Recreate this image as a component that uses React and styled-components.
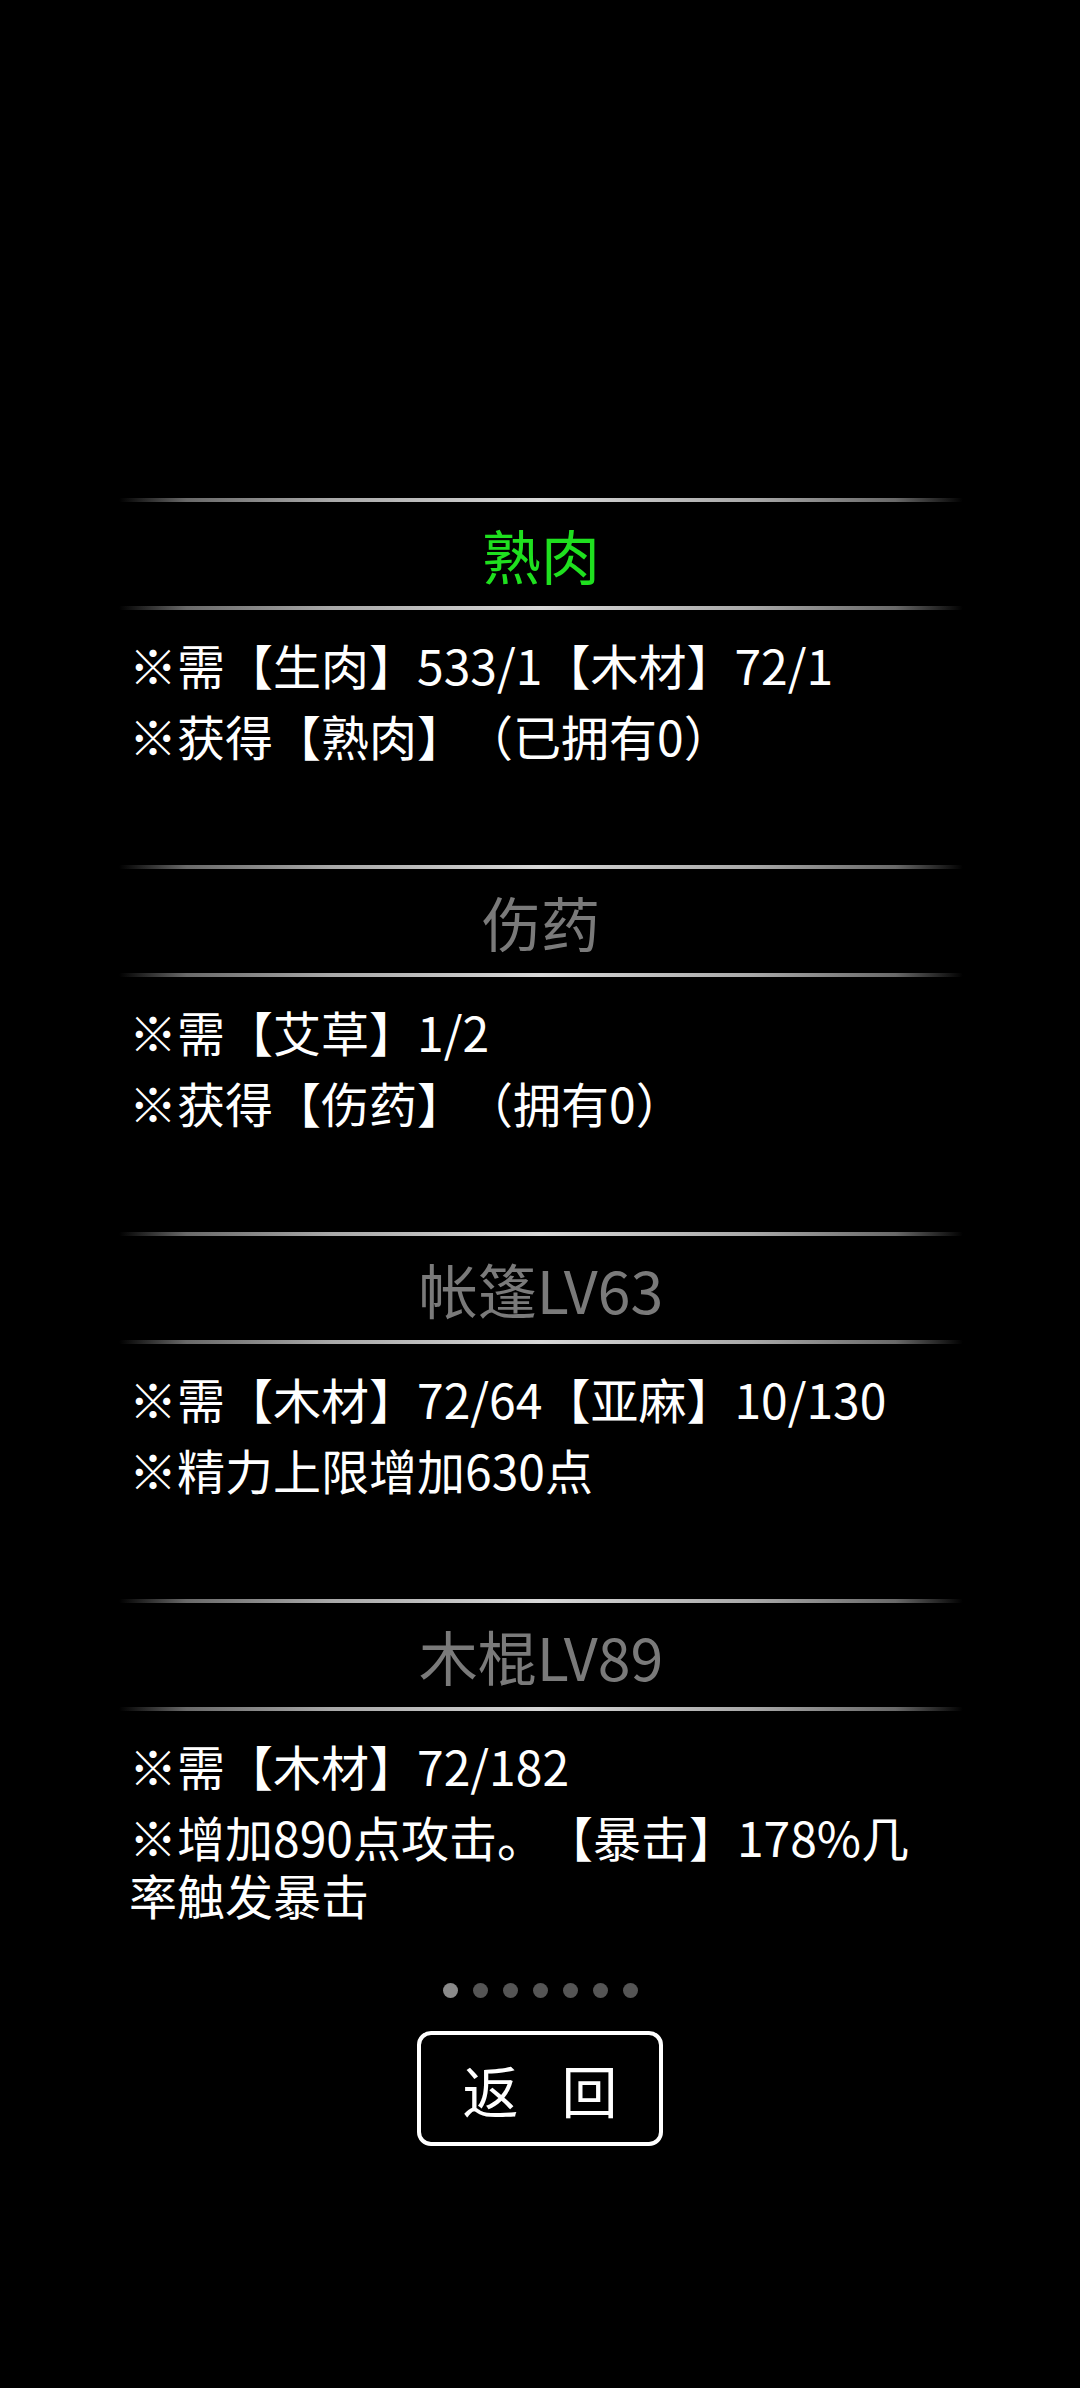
import React from 'react';
import styled, { createGlobalStyle } from 'styled-components';

const GlobalStyle = createGlobalStyle`
  html, body {
    margin: 0;
    padding: 0;
    background: #000;
  }
  body {
    font-family: "Noto Sans CJK SC", "Noto Sans", sans-serif;
    text-spacing-trim: space-all;
  }
`;

const recipes = [
  {
    title: '熟肉',
    active: true,
    lines: ['※需【生肉】533/1【木材】72/1', '※获得【熟肉】（已拥有0）'],
  },
  {
    title: '伤药',
    lines: ['※需【艾草】1/2', '※获得【伤药】（拥有0）'],
  },
  {
    title: '帐篷LV63',
    lines: ['※需【木材】72/64【亚麻】10/130', '※精力上限增加630点'],
  },
  {
    title: '木棍LV89',
    lines: ['※需【木材】72/182', '※增加890点攻击。【暴击】178%几率触发暴击'],
  },
];

export default function App() {
  const page = 0;

  return (
    <>
      <GlobalStyle />
      <Page>
        <List>
          {recipes.map(({ title, active, lines }, index) => (
            <Recipe key={index}>
              <Divider />
              <Title $active={active}>{title}</Title>
              <Divider />
              <Body>
                {lines.map((line, i) => (
                  <Line key={i}>{line}</Line>
                ))}
              </Body>
            </Recipe>
          ))}
        </List>
        <Dots>
          {[0, 1, 2, 3, 4, 5, 6].map((i) => (
            <Dot key={i} $active={i === page} />
          ))}
        </Dots>
        <BackButton>
          <span>返</span>
          <span>回</span>
        </BackButton>
      </Page>
    </>
  );
}

const Page = styled.div`
  width: 1080px;
  min-height: 2388px;
  background: #000;
  display: flex;
  flex-direction: column;
  align-items: center;
  padding-top: 498px;
  box-sizing: border-box;
`;

const List = styled.div`
  width: 844px;
  margin-left: 2px;
  display: flex;
  flex-direction: column;
  gap: 101px;
`;

const Recipe = styled.section`
  display: flex;
  flex-direction: column;
`;

const Divider = styled.div`
  height: 4px;
  width: 100%;
  border-radius: 2px;
  background: linear-gradient(
    90deg,
    rgba(255, 255, 255, 0) 0%,
    rgba(150, 150, 150, 0.7) 8%,
    #a8a8a8 25%,
    #d8d8d8 50%,
    #a8a8a8 75%,
    rgba(150, 150, 150, 0.7) 92%,
    rgba(255, 255, 255, 0) 100%
  );
`;

const Title = styled.h2`
  margin: 0;
  height: 104px;
  display: flex;
  align-items: center;
  justify-content: center;
  font-size: 59px;
  font-weight: 400;
  color: ${(p) => (p.$active ? '#1fe01f' : '#7a7a7a')};
`;

const Body = styled.div`
  padding: 25px 24px 0 10px;
  display: flex;
  flex-direction: column;
  gap: 13px;
`;

const Line = styled.p`
  margin: 0;
  font-size: 48px;
  line-height: 58px;
  color: #fff;
  word-break: break-all;
  text-spacing-trim: space-all;
`;

const Dots = styled.div`
  margin-top: 60px;
  display: flex;
  gap: 15px;
`;

const Dot = styled.span`
  width: 15px;
  height: 15px;
  border-radius: 50%;
  background: ${(p) => (p.$active ? '#8a8a8a' : '#555')};
`;

const BackButton = styled.button`
  margin-top: 33px;
  width: 246px;
  height: 115px;
  box-sizing: border-box;
  border: 4px solid #fff;
  border-radius: 14px;
  background: #000;
  color: #fff;
  display: flex;
  align-items: center;
  justify-content: center;
  gap: 43px;
  font-family: "Noto Sans CJK SC", sans-serif;
  font-size: 56px;
  padding: 0;
  cursor: pointer;
`;
